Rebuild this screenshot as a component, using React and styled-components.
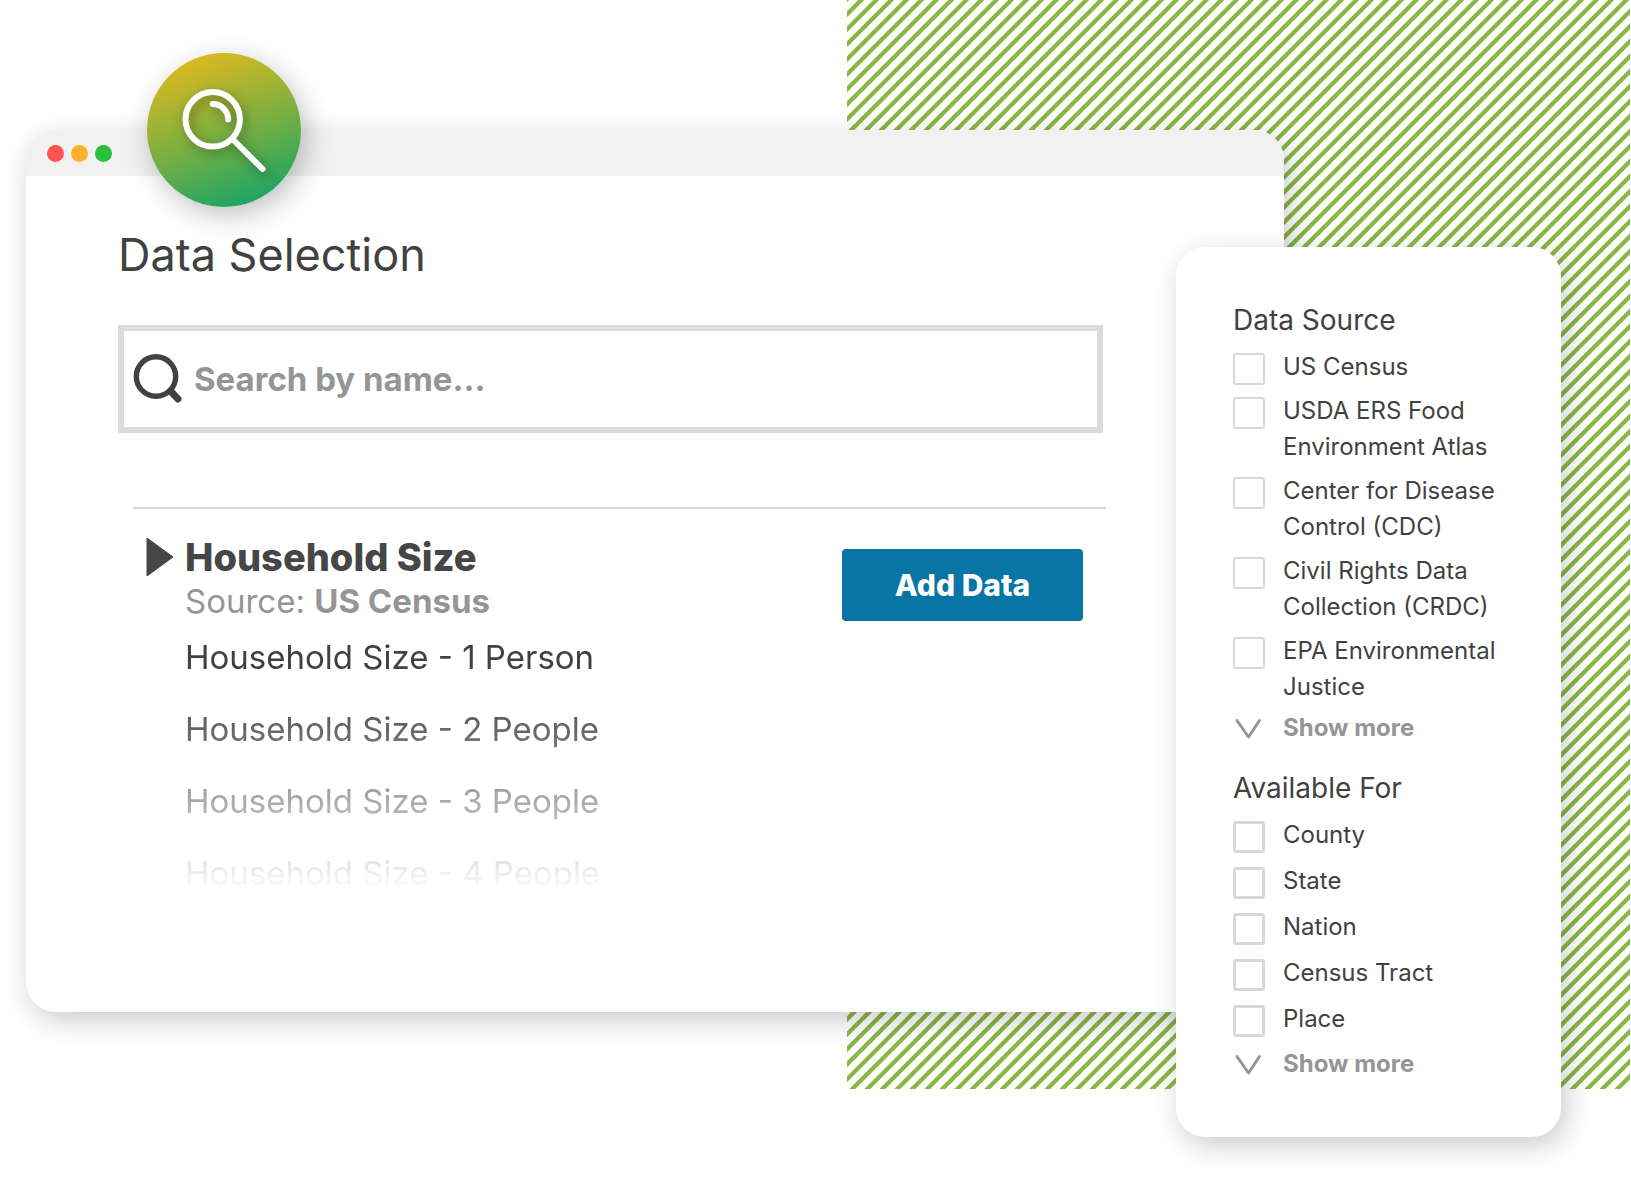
import React, { useState } from 'react';
import styled, { createGlobalStyle } from 'styled-components';

const households = [
  'Household Size - 1 Person',
  'Household Size - 2 People',
  'Household Size - 3 People',
  'Household Size - 4 People',
];

const sources = [
  'US Census',
  'USDA ERS Food Environment Atlas',
  'Center for Disease Control (CDC)',
  'Civil Rights Data Collection (CRDC)',
  'EPA Environmental Justice',
];

const areas = ['County', 'State', 'Nation', 'Census Tract', 'Place'];

const FilterGroup = ({ title, options, gap, moreGap, border }) => (
  <GroupStyled>
    <LegendStyled>{title}</LegendStyled>
    <OptionsStyled $gap={gap}>
      {options.map(option => (
        <OptionStyled key={option}>
          <CheckboxStyled type='checkbox' $border={border} />
          <span>{option}</span>
        </OptionStyled>
      ))}
    </OptionsStyled>
    <ShowMoreStyled type='button' $gap={moreGap}>
      <svg width='32' height='24' viewBox='0 0 32 24' aria-hidden='true'>
        <path
          d='M4 4.5 L15.5 21 L26.5 4.5'
          fill='none'
          stroke='#959595'
          strokeWidth='3'
          strokeLinecap='round'
          strokeLinejoin='round'
        />
      </svg>
      Show more
    </ShowMoreStyled>
  </GroupStyled>
);

const App = () => {
  const [search, setSearch] = useState('');

  return (
    <SceneStyled>
      <GlobalStyle />
      <StripesStyled aria-hidden='true'>
        <svg width='100%' height='100%'>
          <defs>
            <pattern id='stripes' width='15' height='15' patternUnits='userSpaceOnUse'>
              <path
                d='M-5 4.3 L4.3 -5 M-5 19.3 L19.3 -5 M9.3 20 L20 9.3'
                stroke='#88b843'
                strokeWidth='4.3'
              />
            </pattern>
          </defs>
          <rect width='100%' height='100%' fill='url(#stripes)' />
        </svg>
      </StripesStyled>
      <WindowStyled>
        <TitleBarStyled>
          <DotStyled $color='#ff544f' />
          <DotStyled $color='#ffb02a' />
          <DotStyled $color='#28c13a' />
        </TitleBarStyled>
        <BadgeStyled>
          <svg width='154' height='154' viewBox='0 0 154 154' aria-hidden='true'>
            <g fill='none' stroke='#fff' strokeWidth='6' strokeLinecap='round'>
              <circle cx='65.7' cy='66.3' r='27.2' />
              <path d='M65.7 51 A15.5 15.5 0 0 1 81.2 66.5' />
              <path d='M87 87.5 L115.5 116' />
            </g>
          </svg>
        </BadgeStyled>
        <ContentStyled>
          <TitleStyled>Data Selection</TitleStyled>
          <SearchStyled>
            <svg width='52' height='52' viewBox='0 0 52 52' aria-hidden='true'>
              <circle cx='24' cy='23.5' r='19.7' fill='none' stroke='#414141' strokeWidth='5.4' />
              <path d='M38.5 38 L46 46' stroke='#414141' strokeWidth='7' strokeLinecap='round' />
            </svg>
            <input
              type='text'
              aria-label='Search by name'
              placeholder='Search by name...'
              value={search}
              onChange={e => setSearch(e.target.value)}
            />
          </SearchStyled>
          <ResultStyled>
            <ToggleStyled type='button' aria-label='Toggle Household Size'>
              <svg width='28' height='40' viewBox='0 0 28 40' aria-hidden='true'>
                <path d='M1 1 L27 20 L1 39 Z' fill='#464646' stroke='#464646' strokeLinejoin='round' />
              </svg>
            </ToggleStyled>
            <DetailsStyled>
              <NameStyled>Household Size</NameStyled>
              <SourceStyled>
                Source: <strong>US Census</strong>
              </SourceStyled>
              <ListStyled>
                {households.map(item => (
                  <li key={item}>{item}</li>
                ))}
              </ListStyled>
            </DetailsStyled>
            <AddButtonStyled type='button'>Add Data</AddButtonStyled>
          </ResultStyled>
        </ContentStyled>
      </WindowStyled>
      <PanelStyled>
        <FilterGroup title='Data Source' options={sources} gap={8} moreGap={5} border={2} />
        <FilterGroup title='Available For' options={areas} gap={10} moreGap={9} border={3} />
      </PanelStyled>
    </SceneStyled>
  );
};

const GlobalStyle = createGlobalStyle`
  * {
    box-sizing: border-box;
  }
  body {
    margin: 0;
    background: #fff;
    color: #414141;
    font-family: Inter, 'Open Sans', sans-serif;
  }
  h1, h2, p, ul, fieldset, legend {
    margin: 0;
    padding: 0;
  }
  button, input {
    font-family: inherit;
  }
  svg {
    display: block;
    flex-shrink: 0;
  }
`;

const SceneStyled = styled.main`
  position: relative;
  display: flex;
  align-items: flex-start;
  min-height: 100vh;
  padding: 130px 70px 40px 26px;
  overflow: hidden;
`;

const StripesStyled = styled.div`
  position: absolute;
  top: 0;
  right: 1px;
  bottom: 89px;
  left: calc(50% + 31px);
`;

const WindowStyled = styled.section`
  position: relative;
  flex: 1;
  min-width: 0;
  min-height: 882px;
  border-radius: 30px;
  background: #fff;
  box-shadow: 5px 8px 28px rgba(0, 0, 0, 0.21);
`;

const TitleBarStyled = styled.div`
  display: flex;
  align-items: center;
  gap: 7px;
  height: 46px;
  padding: 0 21px;
  border-radius: 30px 30px 0 0;
  background: #f1f1f1;
`;

const DotStyled = styled.span`
  width: 17px;
  height: 17px;
  border-radius: 50%;
  background: ${({ $color }) => $color};
`;

const BadgeStyled = styled.div`
  position: absolute;
  top: -77px;
  left: 121px;
  width: 154px;
  height: 154px;
  border-radius: 50%;
  background: linear-gradient(160deg, #e8b91c 5%, #7fb03f 50%, #0fa36b 95%);
  box-shadow: 5px 8px 28px rgba(0, 0, 0, 0.25);

  svg {
    filter: drop-shadow(3px 4px 6px rgba(0, 0, 0, 0.35));
  }
`;

const ContentStyled = styled.div`
  padding: 52px 181px 0 92px;
`;

const TitleStyled = styled.h1`
  font-size: 45px;
  font-weight: 400;
  line-height: 54px;
`;

const SearchStyled = styled.label`
  display: flex;
  align-items: center;
  gap: 10px;
  height: 108px;
  margin-top: 43px;
  padding: 0 8px;
  border: 6px solid #dbdbdb;

  input {
    flex: 1;
    min-width: 0;
    padding: 0;
    border: 0;
    outline: 0;
    background: none;
    color: #414141;
    font-size: 33px;
    font-weight: 700;
  }
  input::placeholder {
    color: #959595;
    opacity: 1;
  }
`;

const ResultStyled = styled.div`
  display: flex;
  align-items: flex-start;
  margin: 74px -3px 0 15px;
  padding: 28px 23px 0 13px;
  border-top: 2px solid #d4d4d4;
`;

const ToggleStyled = styled.button`
  padding: 0;
  border: 0;
  background: none;
  cursor: pointer;
`;

const DetailsStyled = styled.div`
  flex: 1;
  padding-left: 11px;
`;

const NameStyled = styled.h2`
  color: #464646;
  font-size: 38px;
  font-weight: 800;
  line-height: 40px;
`;

const SourceStyled = styled.p`
  margin-top: 4px;
  color: #959595;
  font-size: 33px;
  line-height: 40px;
`;

const ListStyled = styled.ul`
  list-style: none;
  font-size: 33px;
  line-height: 72px;
  mask-image: linear-gradient(
    #000 20%,
    rgba(0, 0, 0, 0.8) 38%,
    rgba(0, 0, 0, 0.45) 62%,
    rgba(0, 0, 0, 0.14) 84%,
    transparent 94%
  );
`;

const AddButtonStyled = styled.button`
  width: 241px;
  height: 72px;
  margin-top: 12px;
  border: 0;
  border-radius: 4px;
  background: #0875a5;
  color: #fff;
  font-size: 30px;
  font-weight: 800;
  cursor: pointer;
`;

const PanelStyled = styled.aside`
  position: relative;
  flex-shrink: 0;
  width: 385px;
  margin: 117px 0 0 -108px;
  padding: 55px 50px 55px 57px;
  border-radius: 29px;
  background: #fff;
  box-shadow: 5px 8px 28px rgba(0, 0, 0, 0.21);
`;

const GroupStyled = styled.fieldset`
  border: 0;

  & + & {
    margin-top: 24px;
  }
`;

const LegendStyled = styled.legend`
  font-size: 28px;
  line-height: 36px;
`;

const OptionsStyled = styled.div`
  display: flex;
  flex-direction: column;
  gap: ${({ $gap }) => $gap}px;
  padding-top: 11px;
`;

const OptionStyled = styled.label`
  display: flex;
  align-items: flex-start;
  gap: 18px;
  font-size: 24px;
  line-height: 36px;
`;

const CheckboxStyled = styled.input`
  appearance: none;
  flex-shrink: 0;
  width: 32px;
  height: 32px;
  margin: 4px 0 0;
  border: ${({ $border }) => $border}px solid #d8d8d8;
  border-radius: 3px;
  background: #fff;

  &:checked {
    background: #0875a5;
  }
`;

const ShowMoreStyled = styled.button`
  display: flex;
  align-items: center;
  gap: 18px;
  margin-top: ${({ $gap }) => $gap}px;
  padding: 0;
  border: 0;
  background: none;
  color: #959595;
  font-size: 24px;
  font-weight: 700;
  line-height: 36px;
  cursor: pointer;
`;

export default App;
